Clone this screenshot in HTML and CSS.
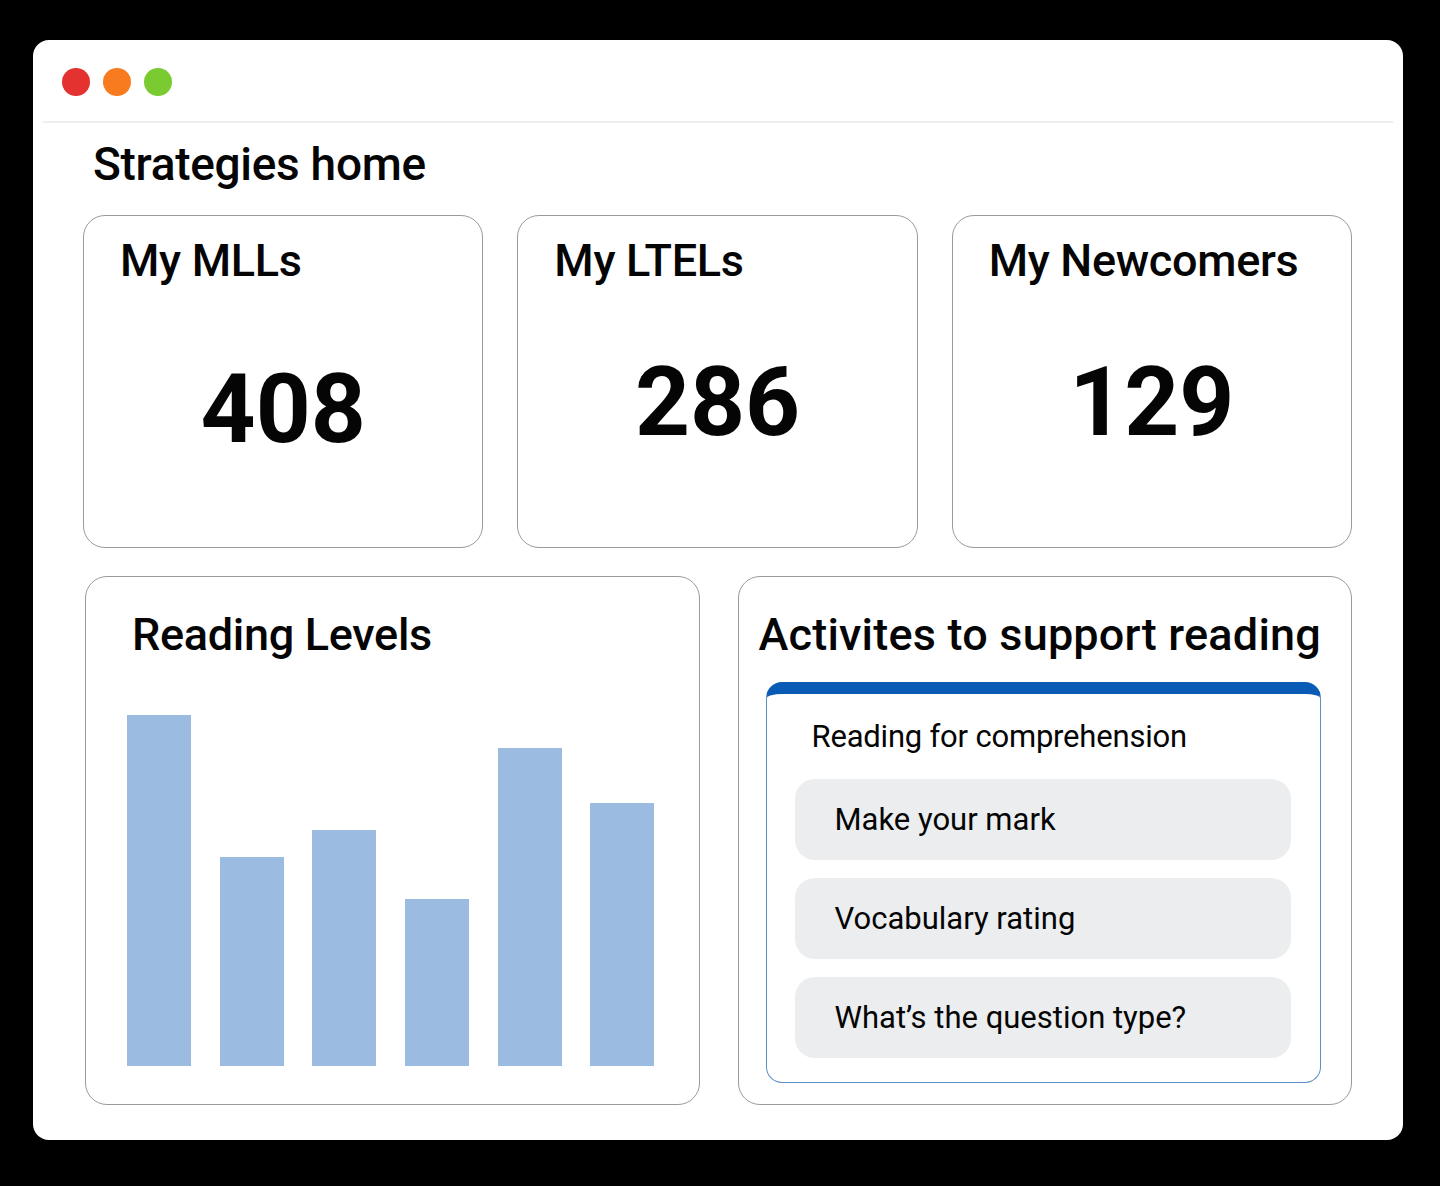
FILE: index.html
```
<!DOCTYPE html>
<html lang="en">

<head>
    <meta charset="UTF-8">
    <meta name="viewport" content="width=device-width, initial-scale=1.0">
    <title>Strategies home</title>
    <link rel="stylesheet" href="styles.css">
</head>

<body>
    <div class="window">
        <div class="window-bar">
            <span class="dot red"></span>
            <span class="dot orange"></span>
            <span class="dot green"></span>
        </div>

        <main class="content">
            <h1 class="title">Strategies home</h1>

            <div class="stats">
                <div class="card stat">
                    <p class="card-title">My MLLs</p>
                    <div class="stat-num low">408</div>
                </div>
                <div class="card stat">
                    <p class="card-title">My LTELs</p>
                    <div class="stat-num">286</div>
                </div>
                <div class="card stat">
                    <p class="card-title">My Newcomers</p>
                    <div class="stat-num">129</div>
                </div>
            </div>

            <div class="panels">
                <div class="card levels">
                    <p class="card-title">Reading Levels</p>
                    <div class="chart">
                        <div class="bar" style="height: 351px"></div>
                        <div class="bar" style="height: 209px"></div>
                        <div class="bar" style="height: 236px"></div>
                        <div class="bar" style="height: 167px"></div>
                        <div class="bar" style="height: 318px"></div>
                        <div class="bar" style="height: 263px"></div>
                    </div>
                </div>

                <div class="card activities">
                    <p class="card-title wide">Activites to support reading</p>
                    <div class="activity-box">
                        <p class="activity-head">Reading for comprehension</p>
                        <div class="activity">Make your mark</div>
                        <div class="activity">Vocabulary rating</div>
                        <div class="activity">What’s the question type?</div>
                    </div>
                </div>
            </div>
        </main>
    </div>
</body>

</html>
```

FILE: styles.css
```
* {
    box-sizing: border-box;
}

body {
    background-color: #000;
    color: #050505;
    margin: 0;
    font-family: Roboto, "Noto Sans", sans-serif;
}

p {
    margin: 0;
}

.window {
    width: 1370px;
    height: 1100px;
    margin: 40px 0 0 33px;
    background-color: #fff;
    border-radius: 16px;
    display: flex;
    flex-direction: column;
}

.window-bar {
    height: 83px;
    margin: 0 10px;
    padding: 28px 0 0 19px;
    border-bottom: 2px solid #eeeeee;
    display: flex;
    gap: 13px;
}

.dot {
    width: 28px;
    height: 28px;
    border-radius: 50%;
}

.red {
    background-color: #e3322f;
}

.orange {
    background-color: #f87b1f;
}

.green {
    background-color: #7acb31;
}

.content {
    padding: 0 51px 0 50px;
}

.title {
    font-size: 46px;
    font-weight: 500;
    margin: 14px 0 0 10px;
    height: 78px;
    letter-spacing: -0.3px;
}

.card {
    border: 1.5px solid #9a9a9a;
    border-radius: 22px;
    background-color: #fff;
}

.card-title {
    font-size: 45px;
    font-weight: 500;
    letter-spacing: -0.3px;
}

.card-title.wide {
    letter-spacing: 0.2px;
}

.stats {
    display: grid;
    grid-template-columns: repeat(3, 1fr);
    gap: 34px;
}

.stat {
    height: 333px;
    padding: 18px 36px 0;
}

.stat-num {
    text-align: center;
    font-size: 96px;
    font-weight: 700;
    margin-top: 59px;
}

.stat-num.low {
    margin-top: 66px;
}

.panels {
    display: grid;
    grid-template-columns: 1fr 1fr;
    gap: 38px;
    margin: 28px 0 0 2px;
}

.levels {
    height: 529px;
    padding: 31px 44px 0 46px;
}

.chart {
    height: 388px;
    margin-top: 17px;
    display: flex;
    align-items: flex-end;
    justify-content: space-between;
    margin-left: -5px;
}

.bar {
    width: 64px;
    background-color: #9bbce0;
}

.activities {
    height: 529px;
    padding: 31px 30px 0 20px;
}

.activity-box {
    margin: 21px 0 0 7px;
    height: 401px;
    border: 1.5px solid #5d8fc8;
    border-top: 12px solid #0a5bb5;
    border-radius: 16px;
    padding: 24px 29px 0 28px;
}

.activity-head {
    font-size: 31px;
    padding-left: 17px;
    margin-bottom: 24px;
    letter-spacing: -0.2px;
}

.activity {
    height: 81px;
    margin-bottom: 18px;
    background-color: #ebedef;
    border-radius: 20px;
    padding-left: 40px;
    display: flex;
    align-items: center;
    font-size: 31px;
}
```
